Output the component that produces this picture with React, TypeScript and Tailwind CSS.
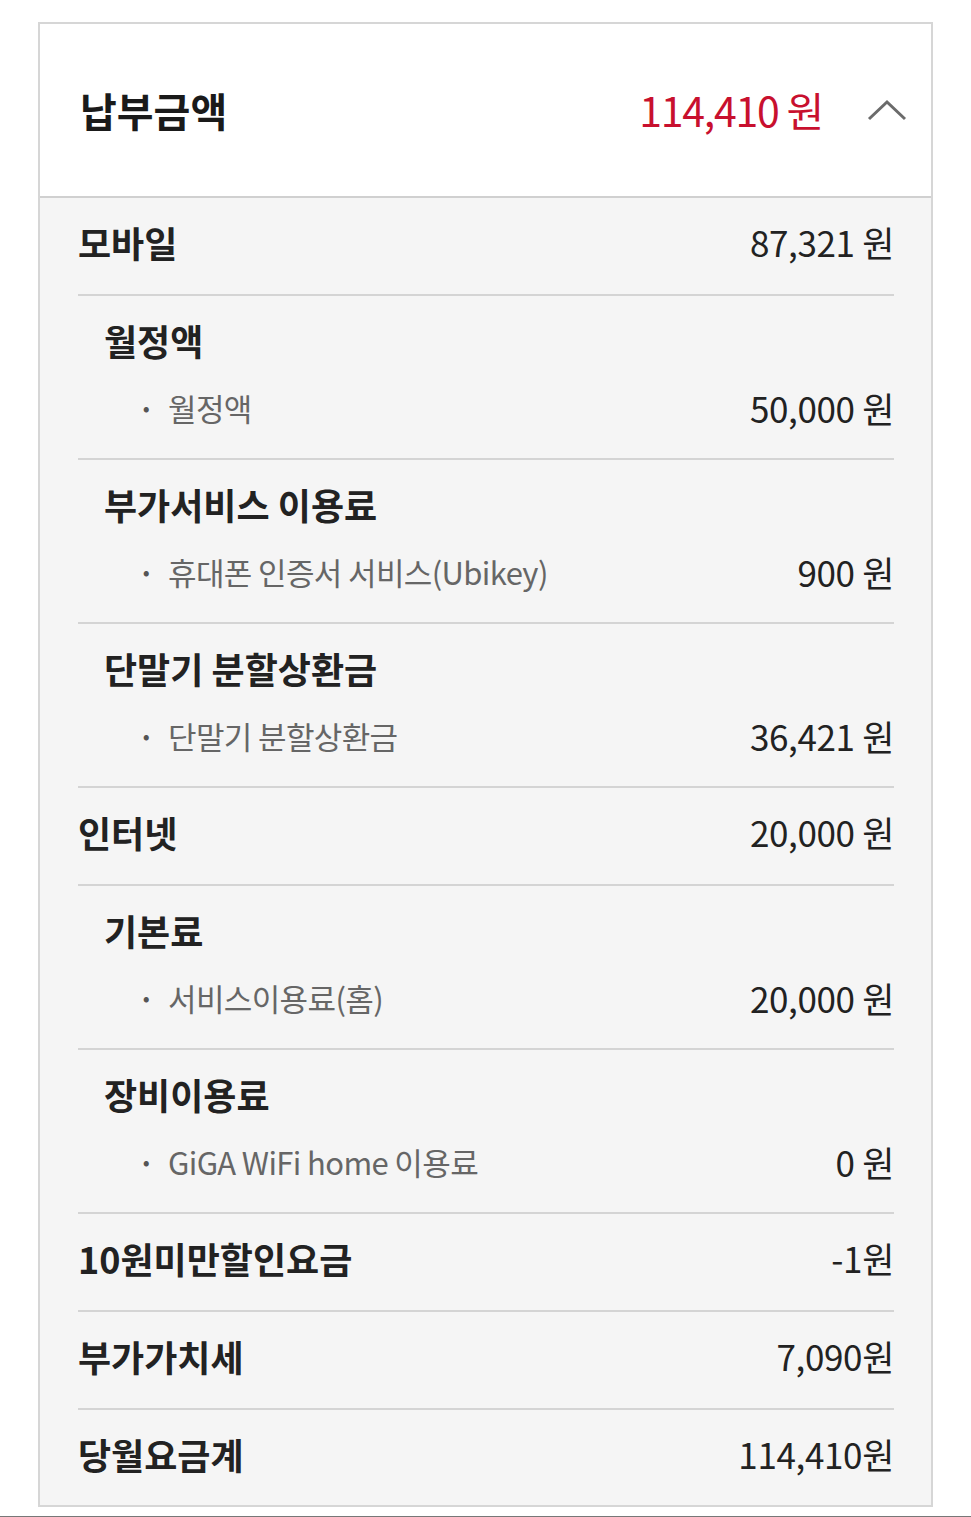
const font = { fontFamily: '"Noto Sans CJK KR", "Noto Sans", sans-serif' }

type Item = { label: string; amount: string }
type Row =
  | { kind: 'top'; label: string; amount: string }
  | { kind: 'group'; title: string; items: Item[] }

const rows: Row[] = [
  { kind: 'top', label: '모바일', amount: '87,321 원' },
  { kind: 'group', title: '월정액', items: [{ label: '월정액', amount: '50,000 원' }] },
  {
    kind: 'group',
    title: '부가서비스 이용료',
    items: [{ label: '휴대폰 인증서 서비스(Ubikey)', amount: '900 원' }],
  },
  {
    kind: 'group',
    title: '단말기 분할상환금',
    items: [{ label: '단말기 분할상환금', amount: '36,421 원' }],
  },
  { kind: 'top', label: '인터넷', amount: '20,000 원' },
  { kind: 'group', title: '기본료', items: [{ label: '서비스이용료(홈)', amount: '20,000 원' }] },
  {
    kind: 'group',
    title: '장비이용료',
    items: [{ label: 'GiGA WiFi home 이용료', amount: '0 원' }],
  },
  { kind: 'top', label: '10원미만할인요금', amount: '-1원' },
  { kind: 'top', label: '부가가치세', amount: '7,090원' },
  { kind: 'top', label: '당월요금계', amount: '114,410원' },
]

function TopRow({ label, amount, last }: { label: string; amount: string; last: boolean }) {
  return (
    <div
      className={`flex items-center justify-between pt-[18px] ${
        last ? 'pb-[25px]' : 'pb-[26px] border-b-2 border-[#d4d4d4]'
      }`}
    >
      <span className="text-[36px] leading-[52px] font-bold text-[#222]">{label}</span>
      <span className="text-[35px] leading-[52px] text-[#222] tracking-[-0.01em]">{amount}</span>
    </div>
  )
}

function GroupRow({ title, items }: { title: string; items: Item[] }) {
  return (
    <div className="pt-[18px] pb-[24px] border-b-2 border-[#d4d4d4]">
      <div className="pl-[26px] text-[36px] leading-[52px] font-bold text-[#222]">{title}</div>
      {items.map((item) => (
        <div key={item.label} className="mt-[16px] flex items-center justify-between">
          <div className="flex items-center">
            <span className="w-[90px] pl-[60px] text-[28px] font-bold text-[#555]">·</span>
            <span className="text-[31px] leading-[52px] text-[#666] tracking-[-0.02em]">{item.label}</span>
          </div>
          <span className="text-[35px] leading-[52px] text-[#222] tracking-[-0.01em]">{item.amount}</span>
        </div>
      ))}
    </div>
  )
}

export default function App() {
  return (
    <div className="min-h-[1517px] bg-white pt-[22px]" style={font}>
      <div className="mx-[38px] border-2 border-[#d6d6d6]">
        {/* Header */}
        <div className="flex h-[174px] items-center justify-between bg-white pl-[40px] pr-[24px] border-b-2 border-[#d0d0d0]">
          <h2 className="text-[40px] font-bold text-[#1a1a1a]">납부금액</h2>
          <div className="flex items-center gap-[44px]">
            <span className="text-[41px] text-[#c8102e] tracking-[-0.03em]">114,410 원</span>
            <svg width="40" height="22" viewBox="0 0 40 22" fill="none">
              <path d="M2 20 L20 3 L38 20" stroke="#6b6b6b" strokeWidth="3" />
            </svg>
          </div>
        </div>

        {/* Body */}
        <div className="bg-[#f5f5f5] pl-[38px] pr-[37px]">
          {rows.map((row, i) =>
            row.kind === 'top' ? (
              <TopRow key={i} label={row.label} amount={row.amount} last={i === rows.length - 1} />
            ) : (
              <GroupRow key={i} title={row.title} items={row.items} />
            )
          )}
        </div>
      </div>
      <div className="mt-[9px] h-[2px] bg-[#777]" />
    </div>
  )
}
